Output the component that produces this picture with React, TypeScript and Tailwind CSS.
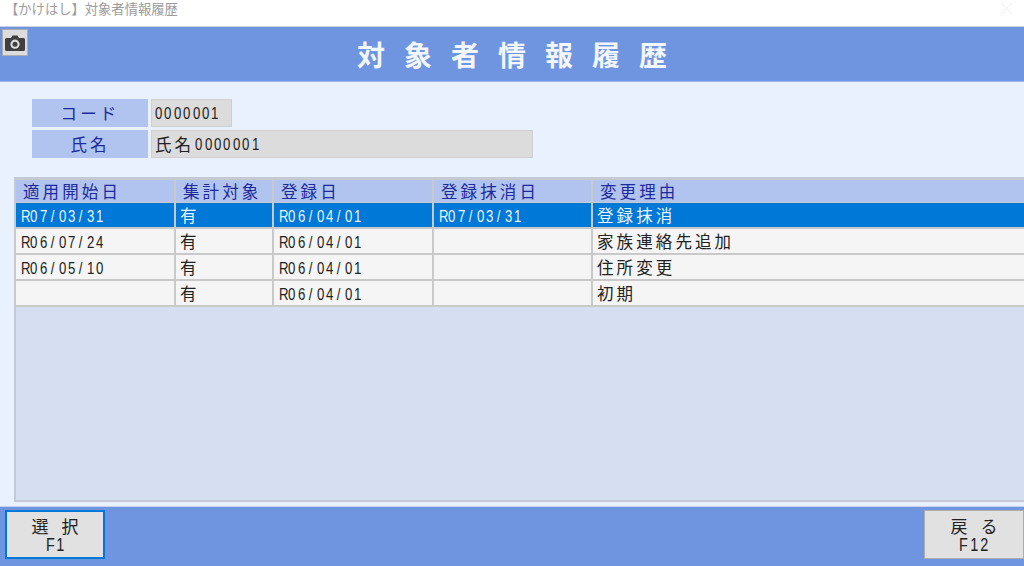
import type { ReactNode } from "react"

const jp = "[font-family:'Noto_Sans_CJK_JP','Noto_Sans_CJK_SC',sans-serif]"

const rows = [
    { start: "R07/03/31", target: "有", reg: "R06/04/01", end: "R07/03/31", reason: "登録抹消", selected: true },
    { start: "R06/07/24", target: "有", reg: "R06/04/01", end: "", reason: "家族連絡先追加", selected: false },
    { start: "R06/05/10", target: "有", reg: "R06/04/01", end: "", reason: "住所変更", selected: false },
    { start: "", target: "有", reg: "R06/04/01", end: "", reason: "初期", selected: false },
]

// half width digits, each one in its own fixed box like the old gothic font
const Num = ({ text }: { text: string }) => (
    <span className="flex pt-[1px] font-['Liberation_Sans',sans-serif] text-[16.5px] font-normal leading-[22px]">
        {text.split("").map((c, i) => (
            <span key={i} className="inline-block w-[9.4px] scale-x-[0.8] text-center">{c}</span>
        ))}
    </span>
)

const Jp = ({ text }: { text: string }) => (
    <span className="text-[16.5px] tracking-[3.1px]">{text}</span>
)

const HeaderCell = ({ text, last }: { text: string; last?: boolean }) => (
    <div className={`flex h-[22px] items-center pl-[7px] bg-[#b1c4f0] text-[#1c2a9c] ${last ? "" : "border-r-2 border-[#c9c9c9]"}`}>
        <Jp text={text} />
    </div>
)

const Cell = ({ children, selected, last }: { children?: ReactNode; selected: boolean; last?: boolean }) => (
    <div className={`flex h-[26px] items-center pl-[4px] border-b-2 border-[#c9c9c9] ${last ? "" : "border-r-2"} ${selected ? "bg-[#0078d7] text-[#e8f2fc]" : "bg-[#f5f5f5] text-[#222222]"}`}>
        {children}
    </div>
)

const FooterButton = ({ label, fkey, focused }: { label: string; fkey: string; focused?: boolean }) => (
    <button className={`flex h-[49px] w-[100px] flex-col items-center justify-center bg-[#e1e1e1] text-[#222222] ${focused ? "border-2 border-[#0078d7]" : "border border-[#adadad]"}`}>
        <span className="pl-[13px] text-[17px] leading-[21px] tracking-[13px]">{label}</span>
        <span className="flex font-['Liberation_Sans',sans-serif] text-[18px] leading-[18px]">
            {fkey.split("").map((c, i) => (
                <span key={i} className="inline-block w-[10.5px] scale-x-[0.8] text-center">{c}</span>
            ))}
        </span>
    </button>
)

const CameraIcon = () => (
    <svg width="20" height="16" viewBox="0 0 20 16">
        <path d="M1.5 3 H6 L7.5 0.5 H12.5 L14 3 H18.5 Q20 3 20 4.5 V14.5 Q20 16 18.5 16 H1.5 Q0 16 0 14.5 V4.5 Q0 3 1.5 3 Z" fill="#3f3f3f" />
        <circle cx="10" cy="9.2" r="4.6" fill="#dcdcdc" />
        <circle cx="10" cy="9.2" r="2.5" fill="#3f3f3f" />
    </svg>
)

const App = () => {
    return (
        <div className={`flex h-[566px] w-[1024px] flex-col overflow-hidden bg-white ${jp}`}>
            <div className="flex h-[27px] items-start justify-between border-b border-[#c9d3e6] pr-[11px]">
                <span className="pl-[5px] text-[13.3px] leading-[17px] text-[#9c9c9c]">【かけはし】対象者情報履歴</span>
                <svg width="13" height="13" viewBox="0 0 13 13" className="mt-[2px] text-[#eeeeee]">
                    <path d="M1 1 L12 12 M12 1 L1 12" stroke="currentColor" strokeWidth="1" />
                </svg>
            </div>

            <div className="relative flex h-[55px] items-center justify-center border-b border-[#9db5e8] bg-[#6f95e1]">
                <button className="absolute left-[2px] top-[2px] flex h-[27px] w-[26px] items-center justify-center border border-[#adadad] bg-[#dcdcdc]">
                    <CameraIcon />
                </button>
                <h1 className="pl-[19px] text-[28px] font-bold leading-none tracking-[19px] text-[#f2f6fd]">対象者情報履歴</h1>
            </div>

            <div className="flex flex-1 flex-col bg-[#e9f0fe] pt-[17px] pl-[14px]">
                <div className="flex flex-col gap-[3px] pl-[18px]">
                    <div className="flex gap-[3px]">
                        <div className="flex h-[28px] w-[116px] items-center justify-center bg-[#b1c4f0] text-[16.5px] tracking-[3.1px] text-[#1c2a9c]">コード</div>
                        <div className="flex h-[28px] w-[81px] items-start border border-[#cfcfcf] bg-[#dcdcdc] pl-[2px] pt-[1px] text-[#222222]"><Num text="0000001" /></div>
                    </div>
                    <div className="flex gap-[3px]">
                        <div className="flex h-[28px] w-[116px] items-center justify-center bg-[#b1c4f0] text-[16.5px] tracking-[3.1px] text-[#1c2a9c]">氏名</div>
                        <div className="flex h-[28px] w-[382px] items-start border border-[#cfcfcf] bg-[#dcdcdc] pl-[3px] pt-[1px] text-[#222222]">
                            <Jp text="氏名" /><Num text="0000001" />
                        </div>
                    </div>
                </div>

                <div className="mt-[19px] h-[325px] border-t-[3px] border-l-2 border-b-2 border-[#c4c9d2] bg-[#d6dff2]">
                    <div className="grid grid-cols-[160px_98px_160px_159px_1fr]">
                        <HeaderCell text="適用開始日" />
                        <HeaderCell text="集計対象" />
                        <HeaderCell text="登録日" />
                        <HeaderCell text="登録抹消日" />
                        <HeaderCell text="変更理由" last />
                        <div className="col-span-5 h-[1px] bg-[#c9c9c9]" />
                        {rows.map((row) => (
                            <div key={row.reason} className="contents">
                                <Cell selected={row.selected}><Num text={row.start} /></Cell>
                                <Cell selected={row.selected}><Jp text={row.target} /></Cell>
                                <Cell selected={row.selected}><Num text={row.reg} /></Cell>
                                <Cell selected={row.selected}><Num text={row.end} /></Cell>
                                <Cell selected={row.selected} last><Jp text={row.reason} /></Cell>
                            </div>
                        ))}
                    </div>
                </div>
            </div>

            <div className="flex h-[60px] items-start justify-between border-t border-[#c5d3f0] bg-[#6f95e1] pt-[3px] pl-[5px]">
                <FooterButton label="選択" fkey="F1" focused />
                <FooterButton label="戻る" fkey="F12" />
            </div>
        </div>
    )
}
export default App
